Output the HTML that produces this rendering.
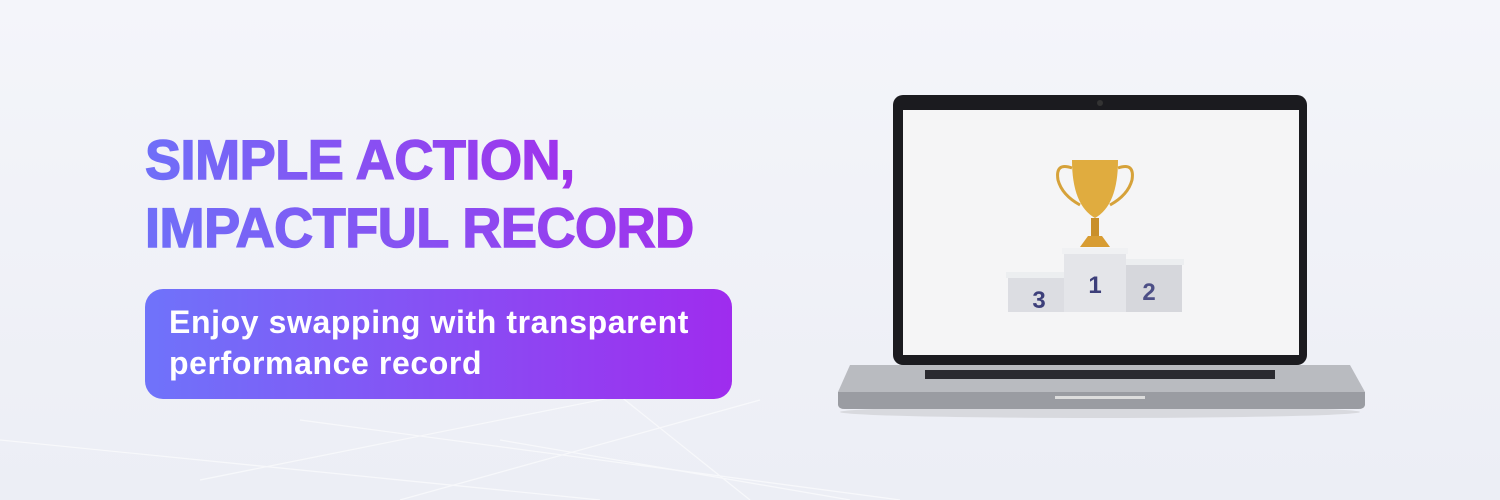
<!DOCTYPE html>
<html><head><style>
body{margin:0;width:1500px;height:500px;overflow:hidden;background:linear-gradient(180deg,#f4f5fa 0%,#eceef5 100%);font-family:"Liberation Sans",sans-serif;position:relative}
.h{position:absolute;left:145px;font-weight:bold;font-size:56px;line-height:66px;background:linear-gradient(90deg,#6f6ff8,#a032ec);-webkit-background-clip:text;background-clip:text;color:transparent;-webkit-text-stroke:1.5px transparent;letter-spacing:-0.5px;white-space:nowrap;transform:scaleX(0.965);transform-origin:left top}
.box{position:absolute;left:145px;top:289px;width:587px;height:110px;border-radius:18px;background:linear-gradient(90deg,#6f73fa,#9f2cee)}
.box div{position:absolute;left:24px;top:13px;color:#fff;font-weight:bold;font-size:32px;line-height:41px;letter-spacing:0.6px;white-space:nowrap}
</style></head><body>
<svg width="1500" height="500" style="position:absolute;left:0;top:0">
<g stroke="#fff" stroke-width="1.2" opacity="0.6" fill="none">
<path d="M300 420 L900 500"/><path d="M200 480 L700 380"/><path d="M400 500 L760 400"/><path d="M0 440 L600 500"/><path d="M500 440 L850 500"/><path d="M600 380 L750 500"/>
</g>
<ellipse cx="1100" cy="412" rx="260" ry="6" fill="#d8d9de"/>
<rect x="893" y="95" width="414" height="270" rx="10" fill="#1b1b1f"/>
<rect x="903" y="110" width="396" height="245" fill="#f5f5f6"/>
<circle cx="1100" cy="103" r="3" fill="#333"/>
<path d="M850 365 L1350 365 L1365 392 L1365 404 Q1365 409 1358 409 L845 409 Q838 409 838 404 L838 392 Z" fill="#b9bbc0"/>
<path d="M838 392 L1365 392 L1365 404 Q1365 409 1358 409 L845 409 Q838 409 838 404 Z" fill="#9a9ca2"/>
<rect x="925" y="370" width="350" height="9" fill="#2a2a30"/>
<rect x="1055" y="396" width="90" height="3" fill="#ddd"/>
<rect x="1008" y="276" width="56" height="36" fill="#dcdde2"/><rect x="1006" y="272" width="60" height="6" fill="#eceef0"/>
<rect x="1126" y="264" width="56" height="48" fill="#d6d7dc"/><rect x="1124" y="259" width="60" height="6" fill="#eceef0"/>
<rect x="1064" y="252" width="62" height="60" fill="#e4e5e9"/><rect x="1062" y="248" width="66" height="6" fill="#f0f1f3"/>
<text x="1039" y="308" font-family="Liberation Sans" font-weight="bold" font-size="24" fill="#3d3f7a" text-anchor="middle">3</text>
<text x="1095" y="293" font-family="Liberation Sans" font-weight="bold" font-size="24" fill="#3d3f7a" text-anchor="middle">1</text>
<text x="1149" y="300" font-family="Liberation Sans" font-weight="bold" font-size="24" fill="#4d4f86" text-anchor="middle">2</text>
<path d="M1072 168 Q1055 162 1058 180 Q1062 195 1080 205 M1118 168 Q1135 162 1132 180 Q1128 195 1110 205" stroke="#d6a23a" stroke-width="3" fill="none"/>
<path d="M1072 160 L1118 160 Q1118 205 1095 218 Q1072 205 1072 160Z" fill="#e0ac3f"/>
<rect x="1091" y="218" width="8" height="18" fill="#c98f2a"/>
<path d="M1080 247 L1110 247 L1102 236 L1088 236Z" fill="#d89c32"/>
</svg>
<div class="h" style="top:127px">SIMPLE ACTION,</div>
<div class="h" style="top:195px">IMPACTFUL RECORD</div>
<div class="box"><div>Enjoy swapping with transparent<br>performance record</div></div>
</body></html>
